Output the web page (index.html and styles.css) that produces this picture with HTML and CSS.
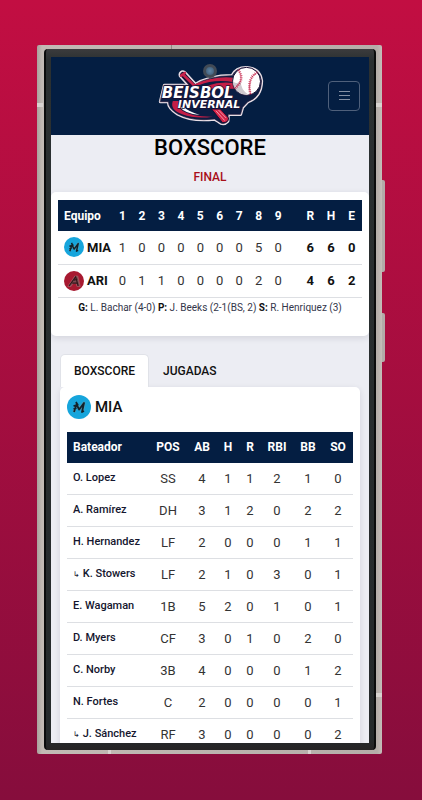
FILE: index.html
```html
<!DOCTYPE html>
<html lang="es">
<head>
    <meta charset="UTF-8">
    <meta name="viewport" content="width=device-width, initial-scale=1">
    <title>Beisbol Invernal - Boxscore</title>
    <link rel="stylesheet" href="styles.css">
</head>
<body>
<!-- logos de los equipos -->
<svg class="defs" aria-hidden="true">
    <symbol id="mia" viewBox="0 0 24 24">
        <circle cx="12" cy="12" r="12" fill="#16a5dc"/>
        <path d="M7 17L9.500 9.500L12.500 14L17 8L15.500 17" fill="none" stroke="#4f9cb8" stroke-width="3" stroke-linejoin="round"/>
        <path d="M7 17L9.500 9.500L12.200 14.500L17 8L15 17l2-1M6.500 11l5-1.500M9 7l1.500 3M6.500 14l3-1" fill="none" stroke="#11222c" stroke-width="1.800" stroke-linejoin="round"/>
    </symbol>
    <symbol id="ari" viewBox="0 0 24 24">
        <circle cx="12" cy="12" r="12" fill="#a71930"/>
        <path d="M4.500 18.500L13 6h3.500l3 12.500h-4l-.8-3.500h-4l-2.200 3.500z" fill="#7d4a50" stroke="#b87078" stroke-width=".6"/>
        <path d="M6 18L14 7l3 11M10 14.500h6M12 11l4-1" fill="none" stroke="#301419" stroke-width="1.300"/>
    </symbol>
</svg>

<div class="phone">
    <span class="seam seam-top"></span>
    <span class="seam seam-left"></span>
    <span class="seam seam-right"></span>
    <span class="seam seam-right-low"></span>
    <span class="seam seam-bottom"></span>
    <span class="seam seam-bottom-far"></span>
    <span class="key key-volume"></span>
    <span class="key key-power"></span>
    <div class="bezel">
        <div class="screen">
            <header class="header">
                <a class="brand" href="#" aria-label="Beisbol Invernal">
                    <svg class="logo" viewBox="50 30 320 186">
                        <g stroke-linejoin="round" stroke-linecap="round">
                            <!-- contorno -->
                            <g fill="#e9dfe6" stroke="#e9dfe6" stroke-width="10">
                                <path d="M72 91L160 91Q205 62 275 62Q286 38 318 38Q358 40 363 78Q362 126 322 140L306 157L300 178H263L262 198Q249 212 235 200L222 192Q155 200 112 177Q83 160 84 140H60z"/>
                                <path d="M127 59L160 95" stroke-width="26"/>
                            </g>
                            <path d="M72 91L160 91Q205 62 275 62Q286 38 318 38Q358 40 363 78Q362 126 322 140L306 157L300 178H263L262 198Q249 212 235 200L222 192Q155 200 112 177Q83 160 84 140H60z" fill="#0b1d43" stroke="#1b1034" stroke-width="2"/>
                            <path d="M127 59L160 95" fill="none" stroke="#1b1034" stroke-width="16"/>
                            <!-- bate -->
                            <path d="M122 62L133 54" stroke="#c9224a" stroke-width="8"/>
                            <path d="M129 60L164 94" stroke="#c9224a" stroke-width="8"/>
                            <path d="M214 162H240L264 189Q264 204 247 203z" fill="#d62348" stroke="#1b1034" stroke-width="3"/>
                            <path d="M227 168L252 196M235 166L256 188" fill="none" stroke="#f29aaa" stroke-width="3"/>
                        </g>
                        <!-- estelas -->
                        <path d="M158 90Q218 61 282 68V82Q222 71 177 90z" fill="#c41e46"/>
                        <path d="M200 92Q240 78 280 84V101H212z" fill="#c41e46"/>
                        <path d="M97 138Q87 164 125 178Q166 193 217 185Q155 186 127 168Q108 155 115 138z" fill="#c41e46"/>
                        <path d="M119 157Q132 176 178 180Q141 168 130 156z" fill="#fff"/>
                        <!-- pelota -->
                        <circle cx="318" cy="79" r="42" fill="#fff" stroke="#1b1034" stroke-width="3"/>
                        <path d="M278 88A41 41 0 0 0 324 119Q300 103 301 80Q280 90 278 75z" fill="#cfc9cf"/>
                        <g fill="none" stroke="#c41e46">
                            <path d="M294 45Q315 75 282 101" stroke-width="2"/>
                            <path d="M294 45Q315 75 282 101" stroke-width="8" stroke-dasharray="2 4"/>
                            <path d="M350 52Q318 70 330 118" stroke-width="2"/>
                            <path d="M350 52Q318 70 330 118" stroke-width="8" stroke-dasharray="2 4"/>
                        </g>
                        <g class="logo-text">
                            <text x="64" y="130" font-size="45">BEISBOL</text>
                            <text x="112" y="160" font-size="33">INVERNAL</text>
                        </g>
                    </svg>
                </a>
                <button class="menu" type="button" aria-label="Menú">
                    <svg width="12" height="12" viewBox="0 0 12 12" stroke="#8590a3" stroke-width="1">
                        <path d="M1 1.500h11M1 5.500h11M1 9.500h11"/>
                    </svg>
                </button>
            </header>

            <main>
                <h1>BOXSCORE</h1>
                <p class="status">FINAL</p>

                <section class="card linescore">
                    <table class="table">
                        <colgroup>
                            <col>
                            <col class="inning" span="9">
                            <col class="gap">
                            <col class="total" span="3">
                        </colgroup>
                        <thead>
                        <tr>
                            <th>Equipo</th>
                            <th>1</th>
                            <th>2</th>
                            <th>3</th>
                            <th>4</th>
                            <th>5</th>
                            <th>6</th>
                            <th>7</th>
                            <th>8</th>
                            <th>9</th>
                            <th></th>
                            <th>R</th>
                            <th>H</th>
                            <th>E</th>
                        </tr>
                        </thead>
                        <tbody>
                        <tr>
                            <th><span class="team"><svg class="team-logo"><use href="#mia"/></svg>MIA</span></th>
                            <td>1</td>
                            <td>0</td>
                            <td>0</td>
                            <td>0</td>
                            <td>0</td>
                            <td>0</td>
                            <td>0</td>
                            <td>5</td>
                            <td>0</td>
                            <td></td>
                            <td class="sum">6</td>
                            <td class="sum">6</td>
                            <td class="sum">0</td>
                        </tr>
                        <tr>
                            <th><span class="team"><svg class="team-logo"><use href="#ari"/></svg>ARI</span></th>
                            <td>0</td>
                            <td>1</td>
                            <td>1</td>
                            <td>0</td>
                            <td>0</td>
                            <td>0</td>
                            <td>0</td>
                            <td>2</td>
                            <td>0</td>
                            <td></td>
                            <td class="sum">4</td>
                            <td class="sum">6</td>
                            <td class="sum">2</td>
                        </tr>
                        </tbody>
                    </table>
                    <p class="pitchers"><b>G:</b> L. Bachar (4-0) <b>P:</b> J. Beeks (2-1(BS, 2) <b>S:</b> R. Henriquez (3)</p>
                </section>

                <div class="tabs" role="tablist">
                    <button class="tab active" type="button" role="tab" aria-selected="true">BOXSCORE</button>
                    <button class="tab" type="button" role="tab" aria-selected="false">JUGADAS</button>
                </div>

                <section class="card batting">
                    <h2><svg class="team-logo"><use href="#mia"/></svg>MIA</h2>
                    <table class="table players">
                        <colgroup>
                            <col>
                            <col class="pos">
                            <col class="stat">
                            <col class="narrow" span="2">
                            <col class="rbi">
                            <col class="stat" span="2">
                        </colgroup>
                        <thead>
                        <tr>
                            <th>Bateador</th>
                            <th>POS</th>
                            <th>AB</th>
                            <th>H</th>
                            <th>R</th>
                            <th>RBI</th>
                            <th>BB</th>
                            <th>SO</th>
                        </tr>
                        </thead>
                        <tbody>
                        <tr><th>O. Lopez</th><td>SS</td><td>4</td><td>1</td><td>1</td><td>2</td><td>1</td><td>0</td></tr>
                        <tr><th>A. Ramírez</th><td>DH</td><td>3</td><td>1</td><td>2</td><td>0</td><td>2</td><td>2</td></tr>
                        <tr><th>H. Hernandez</th><td>LF</td><td>2</td><td>0</td><td>0</td><td>0</td><td>1</td><td>1</td></tr>
                        <tr><th><span class="sub">↳</span> K. Stowers</th><td>LF</td><td>2</td><td>1</td><td>0</td><td>3</td><td>0</td><td>1</td></tr>
                        <tr><th>E. Wagaman</th><td>1B</td><td>5</td><td>2</td><td>0</td><td>1</td><td>0</td><td>1</td></tr>
                        <tr><th>D. Myers</th><td>CF</td><td>3</td><td>0</td><td>1</td><td>0</td><td>2</td><td>0</td></tr>
                        <tr><th>C. Norby</th><td>3B</td><td>4</td><td>0</td><td>0</td><td>0</td><td>1</td><td>2</td></tr>
                        <tr><th>N. Fortes</th><td>C</td><td>2</td><td>0</td><td>0</td><td>0</td><td>0</td><td>1</td></tr>
                        <tr><th><span class="sub">↳</span> J. Sánchez</th><td>RF</td><td>3</td><td>0</td><td>0</td><td>0</td><td>0</td><td>2</td></tr>
                        </tbody>
                    </table>
                </section>
            </main>
        </div>
        <span class="camera"></span>
    </div>
</div>
</body>
</html>
```
FILE: styles.css
```css
* {
    box-sizing: border-box;
    margin: 0;
    padding: 0;
}

body {
    display: flex;
    height: 100vh;
    padding: 45px 40px 46px 37px;
    background: linear-gradient(#c20e42, #860d3c);
    color: #111;
    font-family: Roboto, "Liberation Sans", sans-serif;
    font-size: 13px;
}

button {
    font: inherit;
    color: inherit;
    cursor: pointer;
}

.defs {
    position: absolute;
    width: 0;
    height: 0;
}

/* telefono */
.phone {
    position: relative;
    display: flex;
    flex: 1;
    min-width: 0;
    padding: 4px 6px 4px 7px;
    border-radius: 2px;
    background: linear-gradient(90deg, #a9a19d, #c2bab4 5px, #b5aea9 calc(100% - 5px), #c5bdb9);
}

.bezel {
    position: relative;
    display: flex;
    flex: 1;
    min-width: 0;
    padding: 8px 5px 7px 5px;
    border: solid #0b0c0c;
    border-width: 0 2px;
    border-radius: 4px;
    background: linear-gradient(#3b3b3d, #2b3031 12px, #252a2b calc(100% - 12px), #262424);
}

.screen {
    flex: 1;
    min-width: 0;
    overflow: auto;
    scrollbar-width: none;
    background: #ecedf3;
}

.camera {
    position: absolute;
    top: 15px;
    left: 50%;
    width: 14px;
    height: 14px;
    margin-left: -7px;
    border: 3px solid #424a55;
    border-radius: 50%;
    background: radial-gradient(#5f86a6, #3c5670);
}

.seam {
    position: absolute;
    background: #d8d3d0;
}

.seam-top {
    top: 0;
    left: 134px;
    width: 1px;
    height: 4px;
    background: #918984;
}

.seam-left {
    top: 58px;
    left: 0;
    width: 6px;
    height: 4px;
}

.seam-right {
    top: 58px;
    right: 0;
    width: 6px;
    height: 4px;
}

.seam-right-low {
    right: 0;
    bottom: 57px;
    width: 6px;
    height: 4px;
}

.seam-bottom {
    bottom: 0;
    left: 71px;
    width: 3px;
    height: 4px;
}

.seam-bottom-far {
    right: 71px;
    bottom: 0;
    width: 3px;
    height: 4px;
}

.key {
    position: absolute;
    right: -3px;
    width: 3px;
    border-radius: 0 2px 2px 0;
    background: #b3aaa8;
}

.key-volume {
    top: 135px;
    height: 92px;
}

.key-power {
    top: 268px;
    height: 49px;
}

/* cabecera */
.header {
    display: grid;
    grid-template-columns: 1fr auto 1fr;
    align-items: center;
    height: 78px;
    padding: 0 9px;
    background: #041e42;
}

.brand {
    grid-column: 2;
    display: block;
}

.logo {
    display: block;
    width: 107px;
    height: 62px;
}

.logo-text {
    fill: #fff;
    stroke: #1b1034;
    stroke-width: 4px;
    paint-order: stroke;
    font-family: "DejaVu Sans", sans-serif;
    font-style: italic;
    font-weight: bold;
}

.menu {
    display: flex;
    align-items: center;
    justify-content: center;
    justify-self: end;
    width: 32px;
    height: 30px;
    border: 1px solid #4f607b;
    border-radius: 4px;
    background: none;
}

h1 {
    color: #000;
    font-size: 22px;
    font-weight: 500;
    line-height: 26px;
    text-align: center;
}

.status {
    margin: 8px 0 7px;
    color: #a80f19;
    font-size: 12px;
    font-weight: 500;
    line-height: 16px;
    text-align: center;
}

.card {
    border-radius: 5px;
    background: #fff;
    box-shadow: 0 2px 6px rgba(30, 35, 60, .12);
}

/* tablas */
.table {
    width: 100%;
    border-collapse: collapse;
    table-layout: fixed;
}

.table thead th {
    height: 31px;
    background: #041e42;
    color: #fff;
    font-size: 12px;
    font-weight: 700;
}

.table tbody th,
.table tbody td {
    height: 33px;
    border-bottom: 1px solid #dddfe3;
    text-align: center;
}

.table tbody td {
    color: #333;
    font-weight: 400;
}

.table tr th:first-child {
    padding-left: 6px;
    text-align: left;
    white-space: nowrap;
}

.table tbody .sum {
    color: #111;
    font-weight: 700;
}

.linescore {
    padding: 8px 7px 19px;
}

.inning {
    width: 6.4%;
}

.gap {
    width: 4%;
}

.total {
    width: 6.8%;
}

.team {
    display: flex;
    align-items: center;
    gap: 3px;
    font-weight: 700;
}

.team-logo {
    flex: none;
    width: 20px;
    height: 20px;
}

.pitchers {
    padding: 3px 0 2px;
    color: #33364a;
    font-size: 10px;
    line-height: 14px;
    text-align: center;
}

.pitchers b {
    color: #111;
}

.tabs {
    display: flex;
    margin: 18px 9px 0;
}

.tab {
    height: 33px;
    padding: 0 13px;
    border: 1px solid transparent;
    border-bottom: 0;
    border-radius: 5px 5px 0 0;
    background: none;
    font-size: 12px;
    font-weight: 500;
}

.tab.active {
    border-color: #e0e2e8;
    background: #fff;
}

.batting {
    margin: 0 9px;
    padding: 8px 7px;
}

.batting h2 {
    display: flex;
    align-items: center;
    gap: 4px;
    margin-bottom: 13px;
    font-size: 15px;
    font-weight: 500;
}

.batting .team-logo {
    width: 24px;
    height: 24px;
}

.pos {
    width: 38px;
}

.stat {
    width: 30px;
}

.narrow {
    width: 22px;
}

.rbi {
    width: 32px;
}

.players tbody th,
.players tbody td {
    height: 32px;
}

.players tbody th {
    padding-bottom: 2px;
    color: #14162e;
    font-size: 11px;
    font-weight: 500;
}

.sub {
    font-size: 8px;
}
```
